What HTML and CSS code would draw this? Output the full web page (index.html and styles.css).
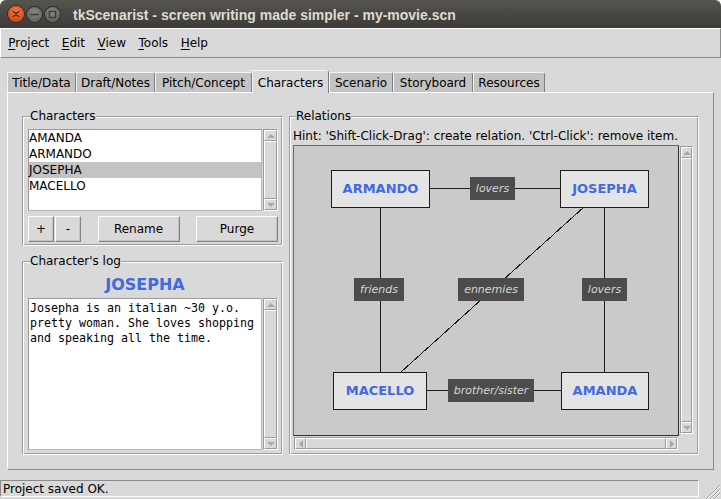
FILE: index.html
```html
<!DOCTYPE html>
<html lang="en">
<head>
<meta charset="utf-8">
<title>tkScenarist</title>
<link rel="stylesheet" href="styles.css">
</head>
<body>
<div class="window">
  <header class="titlebar">
    <div class="wm-buttons">
      <span class="wm-btn wm-close"><svg width="16" height="16" viewBox="0 0 16 16"><path d="M5.5 5.5 L10.5 10.5 M10.5 5.5 L5.5 10.5" stroke="#3a3935" stroke-width="1.6" stroke-linecap="round"/></svg></span>
      <span class="wm-btn wm-min"><svg width="15" height="15" viewBox="0 0 15 15"><path d="M4 7.5 H11" stroke="#3a3935" stroke-width="1.6" stroke-linecap="round"/></svg></span>
      <span class="wm-btn wm-max"><svg width="15" height="15" viewBox="0 0 15 15"><rect x="4.5" y="4.5" width="6" height="6" fill="none" stroke="#3a3935" stroke-width="1.3"/></svg></span>
    </div>
    <div class="wm-title">tkScenarist - screen writing made simpler - my-movie.scn</div>
  </header>

  <nav class="menubar">
    <span class="menu"><u>P</u>roject</span>
    <span class="menu"><u>E</u>dit</span>
    <span class="menu"><u>V</u>iew</span>
    <span class="menu"><u>T</u>ools</span>
    <span class="menu"><u>H</u>elp</span>
  </nav>

  <div class="notebook">
    <div class="tabs">
      <div class="tab">Title/Data</div>
      <div class="tab">Draft/Notes</div>
      <div class="tab">Pitch/Concept</div>
      <div class="tab tab-selected">Characters</div>
      <div class="tab">Scenario</div>
      <div class="tab">Storyboard</div>
      <div class="tab">Resources</div>
    </div>

    <div class="pane">
      <div class="col-left">
        <fieldset class="frame frame-chars">
          <legend>Characters</legend>
          <div class="list-row">
            <ul class="listbox">
              <li>AMANDA</li>
              <li>ARMANDO</li>
              <li class="selected">JOSEPHA</li>
              <li>MACELLO</li>
            </ul>
            <div class="vscroll">
              <div class="sb-arrow"><span class="tri tri-up"></span></div>
              <div class="sb-thumb"></div>
              <div class="sb-arrow"><span class="tri tri-down"></span></div>
            </div>
          </div>
          <div class="btn-row">
            <div class="btn-group">
              <button class="btn btn-sq">+</button>
              <button class="btn btn-sq">-</button>
            </div>
            <button class="btn btn-wide">Rename</button>
            <button class="btn btn-wide">Purge</button>
          </div>
        </fieldset>

        <fieldset class="frame frame-log">
          <legend>Character's log</legend>
          <div class="log-title">JOSEPHA</div>
          <div class="text-row">
            <div class="textbox">Josepha is an italian ~30 y.o. pretty woman. She loves shopping and speaking all the time.</div>
            <div class="vscroll">
              <div class="sb-arrow"><span class="tri tri-up"></span></div>
              <div class="sb-thumb"></div>
              <div class="sb-arrow"><span class="tri tri-down"></span></div>
            </div>
          </div>
        </fieldset>
      </div>

      <fieldset class="frame frame-rel">
        <legend>Relations</legend>
        <div class="hint">Hint: 'Shift-Click-Drag': create relation. 'Ctrl-Click': remove item.</div>
        <div class="canvas-grid">
          <div class="canvas">
            <svg class="links" width="384" height="289" viewBox="0 0 384 289">
              <g stroke="#1c1c1c" stroke-width="1" shape-rendering="crispEdges">
                <line x1="86.5" y1="42.5" x2="310.5" y2="42.5"/>
                <line x1="86.5" y1="42.5" x2="86.5" y2="244.5"/>
                <line x1="310.5" y1="42.5" x2="310.5" y2="244.5"/>
                <line x1="86.5" y1="244.5" x2="310.5" y2="244.5"/>
                <line x1="310.5" y1="42.5" x2="86.5" y2="244.5"/>
              </g>
            </svg>
            <div class="rel rel-lovers-top">lovers</div>
            <div class="rel rel-friends">friends</div>
            <div class="rel rel-ennemies">ennemies</div>
            <div class="rel rel-lovers-right">lovers</div>
            <div class="rel rel-siblings">brother/sister</div>
            <div class="node node-armando">ARMANDO</div>
            <div class="node node-josepha">JOSEPHA</div>
            <div class="node node-macello">MACELLO</div>
            <div class="node node-amanda">AMANDA</div>
          </div>
          <div class="vscroll canvas-vscroll">
            <div class="sb-arrow"><span class="tri tri-up"></span></div>
            <div class="sb-thumb"></div>
            <div class="sb-arrow"><span class="tri tri-down"></span></div>
          </div>
          <div class="hscroll">
            <div class="sb-arrow"><span class="tri tri-left"></span></div>
            <div class="sb-thumb"></div>
            <div class="sb-arrow"><span class="tri tri-right"></span></div>
          </div>
        </div>
      </fieldset>
    </div>
  </div>

  <footer class="statusrow">
    <div class="status">Project saved OK.</div>
    <svg class="grip" width="17" height="15" viewBox="0 0 17 15">
      <g stroke-width="1">
        <line x1="3" y1="15" x2="17" y2="1" stroke="#9a9a9a"/>
        <line x1="4" y1="15" x2="17" y2="2" stroke="#ffffff"/>
        <line x1="7" y1="15" x2="17" y2="5" stroke="#9a9a9a"/>
        <line x1="8" y1="15" x2="17" y2="6" stroke="#ffffff"/>
        <line x1="11" y1="15" x2="17" y2="9" stroke="#9a9a9a"/>
        <line x1="12" y1="15" x2="17" y2="10" stroke="#ffffff"/>
      </g>
    </svg>
  </footer>
</div>
</body>
</html>
```

FILE: styles.css
```css
* { box-sizing: border-box; }

html { background: #ffffff; }

body {
  margin: 0;
  font-family: "DejaVu Sans", sans-serif;
  font-size: 12px;
  line-height: 14px;
  color: #000;
}

.window {
  width: 721px;
  height: 499px;
  background: #d9d9d9;
  border-radius: 6px 6px 0 0;
  overflow: hidden;
  display: flex;
  flex-direction: column;
}

/* ---------- title bar ---------- */
.titlebar {
  flex: none;
  height: 28px;
  background: linear-gradient(#55544f, #3c3b37);
  display: flex;
  align-items: center;
}
.wm-buttons {
  display: flex;
  align-items: center;
  gap: 3px;
  padding-left: 8px;
}
.wm-btn {
  display: flex;
  align-items: center;
  justify-content: center;
  border-radius: 50%;
}
.wm-close {
  width: 16px;
  height: 16px;
  background: radial-gradient(circle at 50% 35%, #f47a4a, #dc4a16 70%);
  box-shadow: 0 0 0 1px #2e2d2a;
}
.wm-min, .wm-max {
  width: 15px;
  height: 15px;
  background: radial-gradient(circle at 50% 35%, #8a8983, #65645e 70%);
  box-shadow: 0 0 0 1px #2e2d2a;
}
.wm-title {
  margin-left: 13px;
  padding-top: 1px;
  font-family: "Liberation Sans", sans-serif;
  font-weight: bold;
  font-size: 14px;
  line-height: 16px;
  color: #dfdbd2;
  white-space: nowrap;
}

/* ---------- menu bar ---------- */
.menubar {
  flex: none;
  height: 30px;
  display: flex;
  padding: 7px 0 0 1px;
  border: 1px solid;
  border-color: #ffffff #8c8c8c #8c8c8c #ffffff;
}
.menu {
  padding: 0 6.25px;
}
.menu u { text-decoration-thickness: 1px; text-underline-offset: 2px; }

/* ---------- notebook ---------- */
.notebook {
  margin: 12px 0 0 7px;
  width: 707px;
}
.tabs {
  display: flex;
  align-items: flex-end;
  height: 22px;
}
.tab {
  position: relative;
  height: 20px;
  padding-top: 3px;
  text-align: center;
  background: #c3c3c3;
  border: 1px solid;
  border-bottom: 0;
  border-color: #f4f4f4 #7e7e7e transparent #f4f4f4;
  border-radius: 0 3px 0 0;
  white-space: nowrap;
}
.tab:nth-child(1) { width: 69px; }
.tab:nth-child(2) { width: 79px; }
.tab:nth-child(3) { width: 97px; }
.tab:nth-child(4) { width: 77px; }
.tab:nth-child(5) { width: 64px; }
.tab:nth-child(6) { width: 80px; }
.tab:nth-child(7) { width: 72px; }
.tab-selected {
  height: 23px;
  margin-bottom: -1px;
  padding-top: 5px;
  background: #d9d9d9;
  z-index: 2;
}

.pane {
  position: relative;
  z-index: 1;
  display: flex;
  gap: 6px;
  padding: 16px 14px 14px 14px;
  border: 1px solid;
  border-color: #ffffff #8a8a8a #8a8a8a #ffffff;
}

/* ---------- labelled frames ---------- */
.frame {
  margin: 0;
  min-width: 0;
  border: 1px solid;
  border-color: #9e9e9e #ffffff #ffffff #9e9e9e;
  box-shadow: inset 1px 1px 0 #ffffff, inset -1px -1px 0 #9e9e9e;
}
.frame legend {
  padding: 0;
  margin-left: 2px;
  line-height: 14px;
  background: #d9d9d9;
}

.col-left {
  width: 261px;
  display: flex;
  flex-direction: column;
  gap: 8px;
}
.frame-chars { padding: 6px 4px 3px 5px; }
.frame-log { padding: 7px 4px 4px 5px; }

.list-row, .text-row {
  display: flex;
  gap: 1px;
}
.list-row { height: 82px; }
.text-row { height: 152px; }

.listbox {
  flex: 1;
  margin: 0;
  padding: 0;
  list-style: none;
  background: #ffffff;
  border: 1px solid;
  border-color: #9a9a9a #b5b5b5 #b5b5b5 #9a9a9a;
}
.listbox li {
  height: 16px;
  line-height: 16px;
  padding-left: 0;
}
.listbox li.selected { background: #c3c3c3; }

.btn-row {
  margin-top: 5px;
  height: 26px;
  display: flex;
  justify-content: space-between;
}
.btn-group { display: flex; gap: 1px; }
.btn {
  font: inherit;
  color: #000;
  height: 26px;
  padding: 0;
  background: #d9d9d9;
  border: 1px solid;
  border-color: #ffffff #828282 #828282 #ffffff;
  box-shadow: inset -1px -1px 0 #c3c3c3;
}
.btn-sq { width: 26px; }
.btn-wide { width: 82px; }

.log-title {
  height: 20px;
  line-height: 20px;
  padding-right: 16px;
  text-align: center;
  font-weight: bold;
  font-size: 16px;
  color: #4169e1;
}
.text-row { margin-top: 3px; }
.textbox {
  flex: 1;
  background: #ffffff;
  border: 1px solid;
  border-color: #9a9a9a #b5b5b5 #b5b5b5 #9a9a9a;
  padding: 1.5px 1px 0 1px;
  font-family: "DejaVu Sans Mono", monospace;
  font-size: 11.63px;
  line-height: 15px;
}

/* ---------- scrollbars ---------- */
.vscroll, .hscroll {
  display: flex;
  background: #c3c3c3;
  border: 1px solid;
  border-color: #9a9a9a #ffffff #ffffff #9a9a9a;
}
.vscroll { width: 15px; flex-direction: column; }
.hscroll { height: 13px; flex-direction: row; }
.sb-arrow {
  flex: none;
  display: flex;
  align-items: center;
  justify-content: center;
  background: #d9d9d9;
  border: 1px solid;
  border-color: #ffffff #9a9a9a #9a9a9a #ffffff;
}
.vscroll .sb-arrow { height: 11px; }
.hscroll .sb-arrow { width: 11px; }
.sb-thumb {
  flex: 1;
  background: #d9d9d9;
  border: 1px solid;
  border-color: #ffffff #9a9a9a #9a9a9a #ffffff;
}
.tri { width: 0; height: 0; border: 4px solid transparent; }
.tri-up { border-top: 0; border-bottom-color: #a8a8a8; }
.tri-down { border-bottom: 0; border-top-color: #a8a8a8; }
.tri-left { border-left: 0; border-right-color: #a8a8a8; }
.tri-right { border-right: 0; border-left-color: #a8a8a8; }

/* ---------- relations ---------- */
.frame-rel {
  flex: 1;
  display: flex;
  flex-direction: column;
  padding: 6px 4px 4px 3px;
}
.frame-rel legend { margin-left: 3px; }
.hint { height: 14px; margin-bottom: 2px; white-space: nowrap; }

.canvas-grid {
  flex: 1;
  display: grid;
  grid-template-columns: 386px 14px;
  grid-template-rows: 1fr 13px;
  column-gap: 1px;
  row-gap: 1px;
}
.canvas {
  position: relative;
  background: #cacaca;
  border: 1px solid;
  border-color: #6a6a6a #303030 #303030 #6a6a6a;
  overflow: hidden;
}
.links { position: absolute; left: 0; top: 0; }
.canvas-vscroll { width: 13px; margin: 1px 0 2px 0; }
.hscroll { margin: 0 1px; }

.node {
  position: absolute;
  height: 38px;
  display: flex;
  align-items: center;
  justify-content: center;
  background: #e4e4e4;
  border: 1px solid #1c1c1c;
  font-weight: bold;
  font-size: 13px;
  color: #4169e1;
}
.node-armando { left: 37px; top: 24px; width: 99px; }
.node-josepha { left: 266px; top: 24px; width: 89px; }
.node-macello { left: 39px; top: 226px; width: 94px; }
.node-amanda { left: 267px; top: 226px; width: 88px; }

.rel {
  position: absolute;
  height: 23px;
  display: flex;
  align-items: center;
  justify-content: center;
  background: #4c4c4c;
  color: #d6d6d6;
  font-style: italic;
  font-size: 11px;
}
.rel-lovers-top { left: 176px; top: 31px; width: 45px; }
.rel-friends { left: 60px; top: 132px; width: 50px; }
.rel-ennemies { left: 164px; top: 132px; width: 66px; }
.rel-lovers-right { left: 288px; top: 132px; width: 45px; }
.rel-siblings { left: 154px; top: 233px; width: 86px; }

/* ---------- status bar ---------- */
.statusrow {
  margin-top: 10px;
  height: 19px;
  display: flex;
  align-items: flex-end;
  gap: 4px;
}
.status {
  width: 699px;
  height: 17px;
  align-self: flex-start;
  padding: 1px 2px;
  border: 1px solid;
  border-color: #8a8a8a #ffffff #ffffff #8a8a8a;
  white-space: nowrap;
}
.grip { flex: none; margin-bottom: 0; }
```
